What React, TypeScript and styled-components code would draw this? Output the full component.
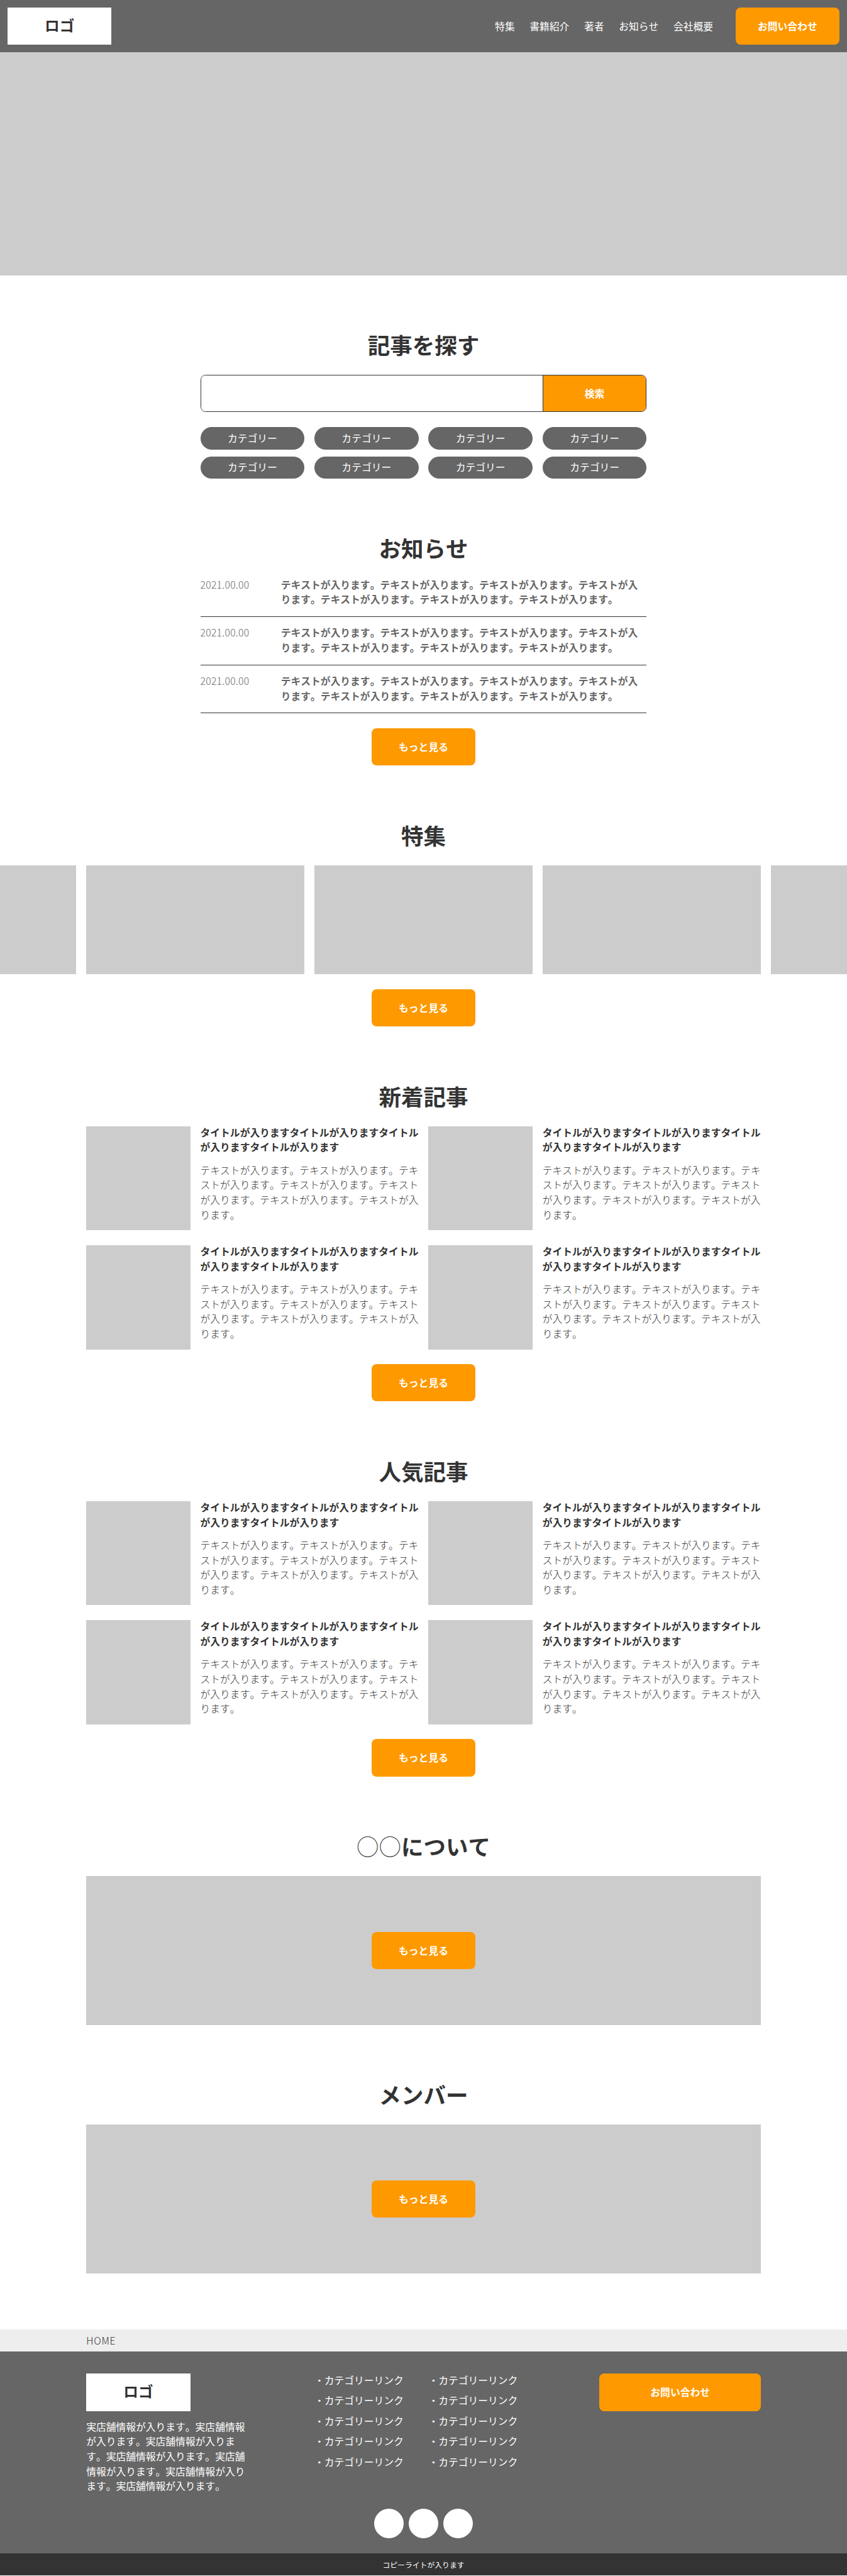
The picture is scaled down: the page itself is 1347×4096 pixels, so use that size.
import React from "react";
import styled, { createGlobalStyle } from "styled-components";

const SCALE = 0.9859;
const u = (n: number) => `${(n * SCALE).toFixed(3)}px`;

const color = {
  ink: "#333",
  gray: "#666",
  placeholder: "#ccc",
  accent: "#f90",
  pale: "#eee",
  white: "#fff",
};

const GlobalStyle = createGlobalStyle`
  *, *::before, *::after { box-sizing: border-box; }
  html, body { margin: 0; padding: 0; }
  body {
    background: ${color.white};
    color: ${color.ink};
    font-family: "Noto Sans CJK JP", sans-serif;
    font-size: ${u(16)};
    line-height: ${u(24)};
    font-kerning: none;
    font-feature-settings: "chws" 0, "palt" 0, "halt" 0;
    text-spacing-trim: space-all;
    overflow-x: hidden;
  }
  h2, h3, p, ul { margin: 0; padding: 0; }
  ul { list-style: none; }
  a { color: inherit; text-decoration: none; }
`;

const Header = styled.header`
  display: flex;
  align-items: center;
  justify-content: space-between;
  height: ${u(84)};
  padding: 0 ${u(12)};
  background: ${color.gray};
`;

const Logo = styled.div`
  display: flex;
  align-items: center;
  justify-content: center;
  width: ${u(168)};
  height: ${u(60)};
  padding-bottom: ${u(2)};
  background: ${color.white};
  color: ${color.ink};
  font-size: ${u(24)};
  font-weight: 700;
`;

const HeaderRight = styled.div`
  display: flex;
  align-items: center;
  gap: ${u(36)};
`;

const Nav = styled.nav`
  display: flex;
  gap: ${u(24)};
  color: ${color.white};
`;

const Button = styled.a<{ $wide?: boolean }>`
  display: flex;
  align-items: center;
  justify-content: center;
  width: ${(p) => u(p.$wide ? 260 : 168)};
  height: ${u(60)};
  border-radius: ${u(8)};
  background: ${color.accent};
  color: ${color.white};
  font-weight: 700;
`;

const Hero = styled.div`
  height: ${u(360)};
  background: ${color.placeholder};
`;

const Section = styled.section<{ $width?: number; $top?: number }>`
  display: flex;
  flex-direction: column;
  align-items: center;
  gap: ${u(24)};
  width: ${(p) => (p.$width ? u(p.$width) : "100%")};
  margin: 0 auto;
  padding-top: ${(p) => u(p.$top ?? 90)};
`;

const Heading = styled.h2`
  padding-bottom: ${u(3)};
  font-size: ${u(36)};
  line-height: ${u(43.8)};
  font-weight: 700;
`;

const Ring = styled.span`
  font-weight: 100;
`;

const SearchBox = styled.form`
  display: flex;
  width: 100%;
  height: ${u(60)};
  border: 1px solid ${color.ink};
  border-radius: ${u(8)};
  overflow: hidden;
`;

const SearchInput = styled.input`
  flex: 1;
  min-width: 0;
  border: 0;
  background: ${color.white};
  outline: none;
`;

const SearchButton = styled.button`
  width: ${u(167)};
  padding: 0;
  border: 0;
  border-left: 1px solid ${color.ink};
  background: ${color.accent};
  color: ${color.white};
  font: inherit;
  font-weight: 700;
`;

const Categories = styled.ul`
  display: grid;
  grid-template-columns: repeat(4, 1fr);
  column-gap: ${u(16)};
  row-gap: ${u(11.2)};
  width: 100%;
`;

const Category = styled.li`
  display: flex;
  align-items: center;
  justify-content: center;
  height: ${u(36)};
  border-radius: ${u(18)};
  background: ${color.gray};
  color: ${color.white};
`;

const NewsList = styled.ul`
  display: flex;
  flex-direction: column;
  gap: ${u(14)};
  width: 100%;
  margin-top: ${u(-1)};
`;

const NewsItem = styled.li`
  display: flex;
  padding-bottom: ${u(15)};
  border-bottom: 1px solid ${color.ink};
`;

const NewsDate = styled.time`
  flex: none;
  width: ${u(130)};
  color: ${color.gray};
  font-weight: 300;
  letter-spacing: ${u(0.25)};
`;

const NewsText = styled.p`
  flex: 1;
  padding-right: ${u(6)};
  color: ${color.gray};
  font-weight: 700;
`;

const Carousel = styled.div`
  display: flex;
  justify-content: center;
  gap: ${u(16)};
  width: 100%;
  overflow: hidden;
`;

const Slide = styled.div`
  flex: none;
  width: ${u(352)};
  height: ${u(176)};
  background: ${color.placeholder};
`;

const ArticleGrid = styled.div`
  display: grid;
  grid-template-columns: 1fr 1fr;
  gap: ${u(24)} ${u(16)};
  width: 100%;
`;

const Article = styled.article`
  display: flex;
  gap: ${u(16)};
  height: ${u(168)};
`;

const Thumb = styled.div`
  flex: none;
  width: ${u(168)};
  background: ${color.placeholder};
`;

const ArticleBody = styled.div`
  flex: 1;
  margin: ${u(-2)} ${u(-3)} 0 0;
`;

const ArticleTitle = styled.h3`
  margin-bottom: ${u(13)};
  font-size: inherit;
  font-weight: 700;
`;

const ArticleText = styled.p`
  font-weight: 300;
`;

const Panel = styled.div`
  display: flex;
  align-items: center;
  justify-content: center;
  width: 100%;
  height: ${u(240)};
  background: ${color.placeholder};
`;

const Breadcrumb = styled.div`
  height: ${u(36)};
  margin-top: ${u(90)};
  background: ${color.pale};
  line-height: ${u(36)};
  font-weight: 300;
  letter-spacing: ${u(0.8)};
`;

const Container = styled.div`
  width: ${u(1088)};
  margin: 0 auto;
`;

const Footer = styled.footer`
  padding: ${u(36)} 0 ${u(24)};
  background: ${color.gray};
  color: ${color.white};
`;

const FooterColumns = styled(Container)`
  display: flex;
  justify-content: space-between;
  align-items: flex-start;
`;

const ShopInfo = styled.div`
  display: flex;
  flex-direction: column;
  gap: ${u(13.2)};
  width: ${u(260)};
`;

const LinkColumns = styled.div`
  display: grid;
  grid-template-columns: ${u(168)} ${u(168)};
  column-gap: ${u(16)};
  row-gap: ${u(9)};
  margin-top: ${u(-2)};
`;

const Socials = styled.div`
  display: flex;
  justify-content: center;
  gap: ${u(8)};
  margin-top: ${u(24)};
`;

const Social = styled.a`
  width: ${u(48)};
  height: ${u(48)};
  border-radius: 50%;
  background: ${color.white};
`;

const Copyright = styled.div`
  height: ${u(36)};
  background: ${color.ink};
  color: ${color.white};
  font-size: ${u(12)};
  line-height: ${u(36)};
  text-align: center;
`;

const navItems = ["特集", "書籍紹介", "著者", "お知らせ", "会社概要"];
const articleTitle = "タイトルが入ります".repeat(4);
const sentence = "テキストが入ります。";

const range = (n: number) => Array.from({ length: n }, (_, i) => i);

function ArticleSection({ title }: { title: string }) {
  return (
    <Section $width={1088}>
      <Heading>{title}</Heading>
      <ArticleGrid>
        {range(4).map((i) => (
          <Article key={i}>
            <Thumb />
            <ArticleBody>
              <ArticleTitle>{articleTitle}</ArticleTitle>
              <ArticleText>{sentence.repeat(7)}</ArticleText>
            </ArticleBody>
          </Article>
        ))}
      </ArticleGrid>
      <Button>もっと見る</Button>
    </Section>
  );
}

export default function App() {
  return (
    <>
      <GlobalStyle />
      <Header>
        <Logo>ロゴ</Logo>
        <HeaderRight>
          <Nav>
            {navItems.map((item) => (
              <a key={item}>{item}</a>
            ))}
          </Nav>
          <Button>お問い合わせ</Button>
        </HeaderRight>
      </Header>
      <Hero />
      <main>
        <Section $width={720}>
          <Heading>記事を探す</Heading>
          <SearchBox>
            <SearchInput type="text" />
            <SearchButton type="button">検索</SearchButton>
          </SearchBox>
          <Categories>
            {range(8).map((i) => (
              <Category key={i}>カテゴリー</Category>
            ))}
          </Categories>
        </Section>

        <Section $width={720} $top={89}>
          <Heading>お知らせ</Heading>
          <NewsList>
            {range(3).map((i) => (
              <NewsItem key={i}>
                <NewsDate>2021.00.00</NewsDate>
                <NewsText>{sentence.repeat(7)}</NewsText>
              </NewsItem>
            ))}
          </NewsList>
          <Button>もっと見る</Button>
        </Section>

        <Section>
          <Heading>特集</Heading>
          <Carousel>
            {range(5).map((i) => (
              <Slide key={i} />
            ))}
          </Carousel>
          <Button>もっと見る</Button>
        </Section>

        <ArticleSection title="新着記事" />
        <ArticleSection title="人気記事" />

        <Section $width={1088}>
          <Heading>
            <Ring>○○</Ring>について
          </Heading>
          <Panel>
            <Button>もっと見る</Button>
          </Panel>
        </Section>

        <Section $width={1088}>
          <Heading>メンバー</Heading>
          <Panel>
            <Button>もっと見る</Button>
          </Panel>
        </Section>
      </main>

      <Breadcrumb>
        <Container>HOME</Container>
      </Breadcrumb>
      <Footer>
        <FooterColumns>
          <ShopInfo>
            <Logo>ロゴ</Logo>
            <p>{"実店舗情報が入ります。".repeat(7)}</p>
          </ShopInfo>
          <LinkColumns>
            {range(10).map((i) => (
              <a key={i}>・カテゴリーリンク</a>
            ))}
          </LinkColumns>
          <Button $wide>お問い合わせ</Button>
        </FooterColumns>
        <Socials>
          <Social />
          <Social />
          <Social />
        </Socials>
      </Footer>
      <Copyright>コピーライトが入ります</Copyright>
    </>
  );
}
